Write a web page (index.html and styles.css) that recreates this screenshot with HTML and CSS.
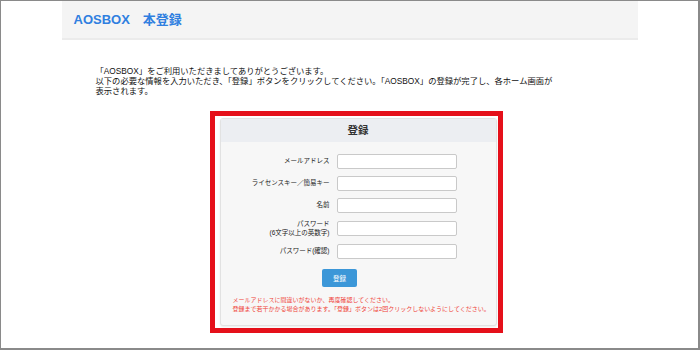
FILE: index.html
```html
<!DOCTYPE html>
<html lang="ja">

<head>
    <meta charset="UTF-8">
    <title>AOSBOX 本登録</title>
    <link rel="stylesheet" href="styles.css">
</head>

<body>

    <div class="frame">
        <div class="page">

            <div class="header">
                <h1>AOSBOX　本登録</h1>
            </div>

            <p class="intro">
                「AOSBOX」をご利用いただきましてありがとうございます。<br>
                以下の必要な情報を入力いただき、「登録」ボタンをクリックしてください。「AOSBOX」の登録が完了し、各ホーム画面が<br>
                表示されます。
            </p>

            <div class="highlight">
                <div class="panel">
                    <div class="panel-head">登録</div>

                    <form class="regist">
                        <label for="mail">メールアドレス</label>
                        <input type="text" id="mail">

                        <label for="license">ライセンスキー／簡易キー</label>
                        <input type="text" id="license">

                        <label for="name">名前</label>
                        <input type="text" id="name">

                        <label for="pass">パスワード<br>(6文字以上の英数字)</label>
                        <input type="password" id="pass">

                        <label for="pass2">パスワード(確認)</label>
                        <input type="password" id="pass2">

                        <div class="actions">
                            <button type="button">登録</button>
                        </div>
                    </form>

                    <p class="notes">
                        メールアドレスに間違いがないか、再度確認してください。<br>
                        登録まで若干かかる場合があります。「登録」ボタンは2回クリックしないようにしてください。
                    </p>
                </div>
            </div>

        </div>
    </div>

</body>

</html>
```

FILE: styles.css
```css
:root {
    --blue: #2f7fe0;
    --red: #e5101a;
    --frame-color: #8a8a8a;
}

body {
    font-family: 'Liberation Sans', 'Noto Sans CJK JP', sans-serif;
    margin: 0;
}

.frame {
    background-color: white;
    border-color: var(--frame-color);
    border-style: solid;
    border-width: 1px 2px 2px 1px;
    box-sizing: border-box;
    height: 350px;
    overflow: hidden;
    width: 700px;
}

.page {
    margin: 0 auto;
    width: 576px;
}

/* ====== HEADER ====== */

.header {
    background-color: #f4f4f4;
    border-bottom: 2px solid #ebebeb;
    height: 37px;
    padding-left: 12px;
}

.header h1 {
    color: var(--blue);
    font-size: 13px;
    font-weight: 700;
    line-height: 37px;
    margin: 0;
}

.intro {
    color: #111;
    font-size: 8.3px;
    line-height: 10px;
    margin: 26px 0 0;
    padding-left: 34px;
    white-space: nowrap;
}

/* ====== REGISTER BOX ====== */

.highlight {
    border: 5px solid var(--red);
    box-sizing: border-box;
    margin: 15px 0 0 148px;
    padding: 2px 1px 2px 5px;
    width: 293px;
}

.panel {
    background-color: #f7f7f7;
    border: 1px solid #e2e2e2;
    border-radius: 3px;
    box-shadow: 0 1px 2px rgba(0, 0, 0, .08);
}

.panel-head {
    background-color: #eceef2;
    color: #333;
    font-size: 10.5px;
    font-weight: 700;
    height: 23px;
    line-height: 23px;
    text-align: center;
}

.regist {
    align-items: center;
    display: grid;
    gap: 7px 7px;
    grid-template-columns: 109px 120px;
    margin-top: 12px;
}

.regist label {
    color: #222;
    font-size: 6.5px;
    line-height: 8.5px;
    text-align: right;
    white-space: nowrap;
}

.regist input {
    background-color: white;
    border: 1px solid #c9c9c9;
    border-radius: 2px;
    box-sizing: border-box;
    height: 15px;
    margin: 0;
    padding: 0 4px;
    width: 120px;
}

.actions {
    display: flex;
    grid-column: 1 / -1;
    justify-content: center;
    margin-top: 3px;
}

.actions button {
    background-color: #3c97d8;
    border: none;
    border-radius: 2px;
    color: white;
    font-family: inherit;
    font-size: 6.5px;
    height: 18px;
    margin-left: 2px;
    padding: 0;
    width: 35px;
}

.notes {
    color: #ef4338;
    font-size: 6px;
    line-height: 8.5px;
    margin: 9px 0 12px;
    padding-left: 12px;
    white-space: nowrap;
}
```
